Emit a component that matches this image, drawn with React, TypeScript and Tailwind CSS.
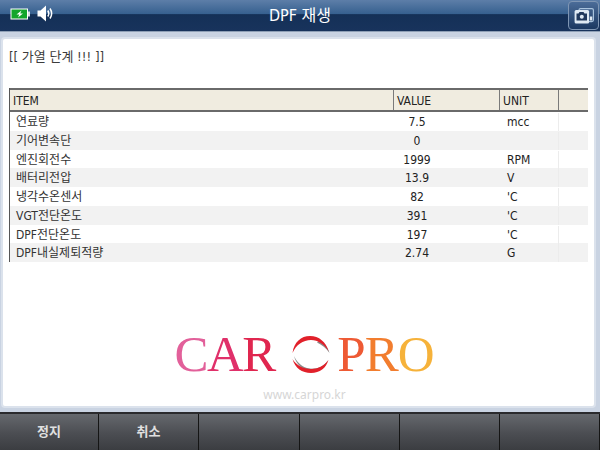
const rows = [
  { item: '연료량', value: '7.5', unit: 'mcc' },
  { item: '기어변속단', value: '0', unit: '' },
  { item: '엔진회전수', value: '1999', unit: 'RPM' },
  { item: '배터리전압', value: '13.9', unit: 'V' },
  { item: '냉각수온센서', value: '82', unit: "'C" },
  { item: 'VGT전단온도', value: '391', unit: "'C" },
  { item: 'DPF전단온도', value: '197', unit: "'C" },
  { item: 'DPF내실제퇴적량', value: '2.74', unit: 'G' },
];

const softKeys = ['정지', '취소', '', '', '', ''];

function BatteryIcon() {
  return (
    <svg width="20" height="12" viewBox="0 0 20 12">
      <rect x="0.5" y="0.5" width="17.500" height="11" fill="#ffffff" />
      <rect x="1.500" y="1.500" width="15.500" height="9" fill="#12a52c" />
      <rect x="18" y="3.500" width="2" height="5" fill="#d8dde4" />
      <path d="M11.500 2.500 L6.500 6.600 H9.300 L8 9.500 L13 5.400 H10.200 Z" fill="#ffffff" />
    </svg>
  );
}

function SpeakerIcon() {
  return (
    <svg width="17" height="17" viewBox="0 0 17 17" fill="none">
      <path d="M0.500 5.500 H3.500 L9 0.500 V16.500 L3.500 11.500 H0.500 Z" fill="#ffffff" />
      <path d="M10.800 5.500 Q12.800 8.500 10.800 11.500" stroke="#ffffff" strokeWidth="1.500" />
      <path d="M13 3.500 Q16.300 8.500 13 13.500" stroke="#ffffff" strokeWidth="1.500" />
    </svg>
  );
}

function CaptureIcon() {
  return (
    <svg width="20" height="16" viewBox="0 0 20 16" fill="none">
      <rect x="5" y="0.600" width="14.400" height="13" rx="1.500" stroke="#a9c3dd" strokeWidth="1.200" />
      <rect x="0.600" y="2" width="14.500" height="13.400" rx="1.500" fill="#dfe9f3" />
      <path d="M2.500 5.500 H4.500 L5.500 4 H9.500 L10.500 5.500 H13 V12.500 H2.500 Z" fill="#20385c" />
      <circle cx="7.800" cy="8.800" r="2" fill="#dfe9f3" />
      <rect x="15.800" y="8.500" width="2.500" height="4" fill="#dfe9f3" />
    </svg>
  );
}

function LogoRing() {
  return (
    <svg width="38" height="39" viewBox="6 4 38 39" fill="none">
      <path d="M8 25 C10 33 17 40 25 40.500 C33 40.500 39 36 42 29 C37 37 28 39 21 37 C15 35 11 31 8 25 Z" fill="#8a8a8a" />
      <path d="M33 10 C38 12 42 16 43.500 22 C40 17 36 14 31 11.500 Z" fill="#8a8a8a" />
      <path d="M6.500 22 C8 11 15 5 24 5 C33 5 40 11 42.500 20 C38 13 32 9 25 9 C17 9 10 14 6.500 22 Z" fill="#e1202a" />
      <path d="M6.500 28 C9 37 16 42 25 42 C34 42 40 37 42.500 29 C38 35 32 38 25 38 C17 38 10 34 6.500 28 Z" fill="#e1202a" />
    </svg>
  );
}

export default function App() {
  return (
    <div className="w-[600px] h-[450px] flex flex-col overflow-hidden bg-[#c9d3e2] font-['DejaVu_Sans_Condensed','Noto_Sans_CJK_KR',sans-serif]">
      <header className="h-8 grid grid-cols-[1fr_auto_1fr] items-center relative bg-[linear-gradient(to_bottom,#5d7ea8_0%,#36608f_45%,#143057_47%,#18335c_100%)] border-b border-[#8fa0b6]">
        <div className="flex items-center gap-[7px] pl-[10px] pb-[4px]">
          <BatteryIcon />
          <SpeakerIcon />
        </div>
        <h1 className="text-center text-white text-[16px]">DPF 재생</h1>
        <div />
        <div className="absolute right-[1px] top-[1px] w-[31px] h-[29px] rounded-[4px] border border-[#7f96b4] bg-[linear-gradient(to_bottom,#4b6c98,#1b3861)] flex items-center justify-center">
          <CaptureIcon />
        </div>
      </header>

      <main className="ml-[3px] w-[591px] mt-[7px] h-[367px] bg-white px-[6px] flex flex-col rounded-[2px] ring-2 ring-[#dbe2ec]">
        <p className="mt-[9px] text-[13px] leading-[18px] text-[#3c3c3c]">[[ 가열 단계 !!! ]]</p>

        <div className="mt-[22px] border-l border-[#555555] text-[12px] text-[#222222]">
          <div className="h-[24px] grid grid-cols-[384px_106px_59px_27px] items-stretch bg-[#f0ece0] border-t-2 border-b-2 border-[#6a6a6a]">
            <div className="pl-[3px] pt-[1px] flex items-center border-r border-[#7a7a7a]">ITEM</div>
            <div className="pl-[3px] pt-[1px] flex items-center border-r border-[#7a7a7a]">VALUE</div>
            <div className="pl-[3px] pt-[1px] flex items-center border-r border-[#7a7a7a]">UNIT</div>
            <div />
          </div>
          {rows.map((row, i) => (
            <div
              key={row.item}
              className={`h-[18.75px] pt-[1px] grid grid-cols-[384px_106px_59px_27px] items-center ${i % 2 === 1 ? 'bg-[#f2f2f2]' : 'bg-white'}`}
            >
              <div className="pl-[6px] text-[#333333]">{row.item}</div>
              <div className="w-[46px] text-center">{row.value}</div>
              <div className="pl-[7px] border-r border-[#ececec] h-full flex items-center">{row.unit}</div>
              <div />
            </div>
          ))}
        </div>

        <div className="flex-1 flex flex-col items-center justify-end pb-[3px] pl-[12px]">
          <div className="flex items-center font-['Liberation_Serif',serif] text-[51px] leading-[52px]">
            <span className="text-[#e2609a] tracking-[-1.500px]">C</span>
            <span className="text-[#e0306a] tracking-[-1.500px]">A</span>
            <span className="text-[#e0264f]">R</span>
            <span className="ml-[16px] mr-[7px]"><LogoRing /></span>
            <span className="text-[#ee5a34] tracking-[-1px]">P</span>
            <span className="text-[#f27d2e] tracking-[-1px]">R</span>
            <span className="text-[#f6b23a]">O</span>
          </div>
          <div className="mt-[7px] text-[12px] leading-[16px] text-[#d6d6d6] font-['Noto_Sans',sans-serif]">www.carpro.kr</div>
        </div>
      </main>

      <footer className="mt-auto h-[38px] grid grid-cols-[99px_100px_101px_100px_100px_100px] border-t-2 border-[#2a2a2d] bg-[linear-gradient(to_bottom,#65686d_0%,#4b4d52_55%,#3b3d41_100%)]">
        {softKeys.map((label, i) => (
          <div
            key={i}
            className="flex items-center justify-center text-[13px] font-bold text-[#e0e0e0] border-r border-[#151515]"
          >
            {label}
          </div>
        ))}
      </footer>
    </div>
  );
}
